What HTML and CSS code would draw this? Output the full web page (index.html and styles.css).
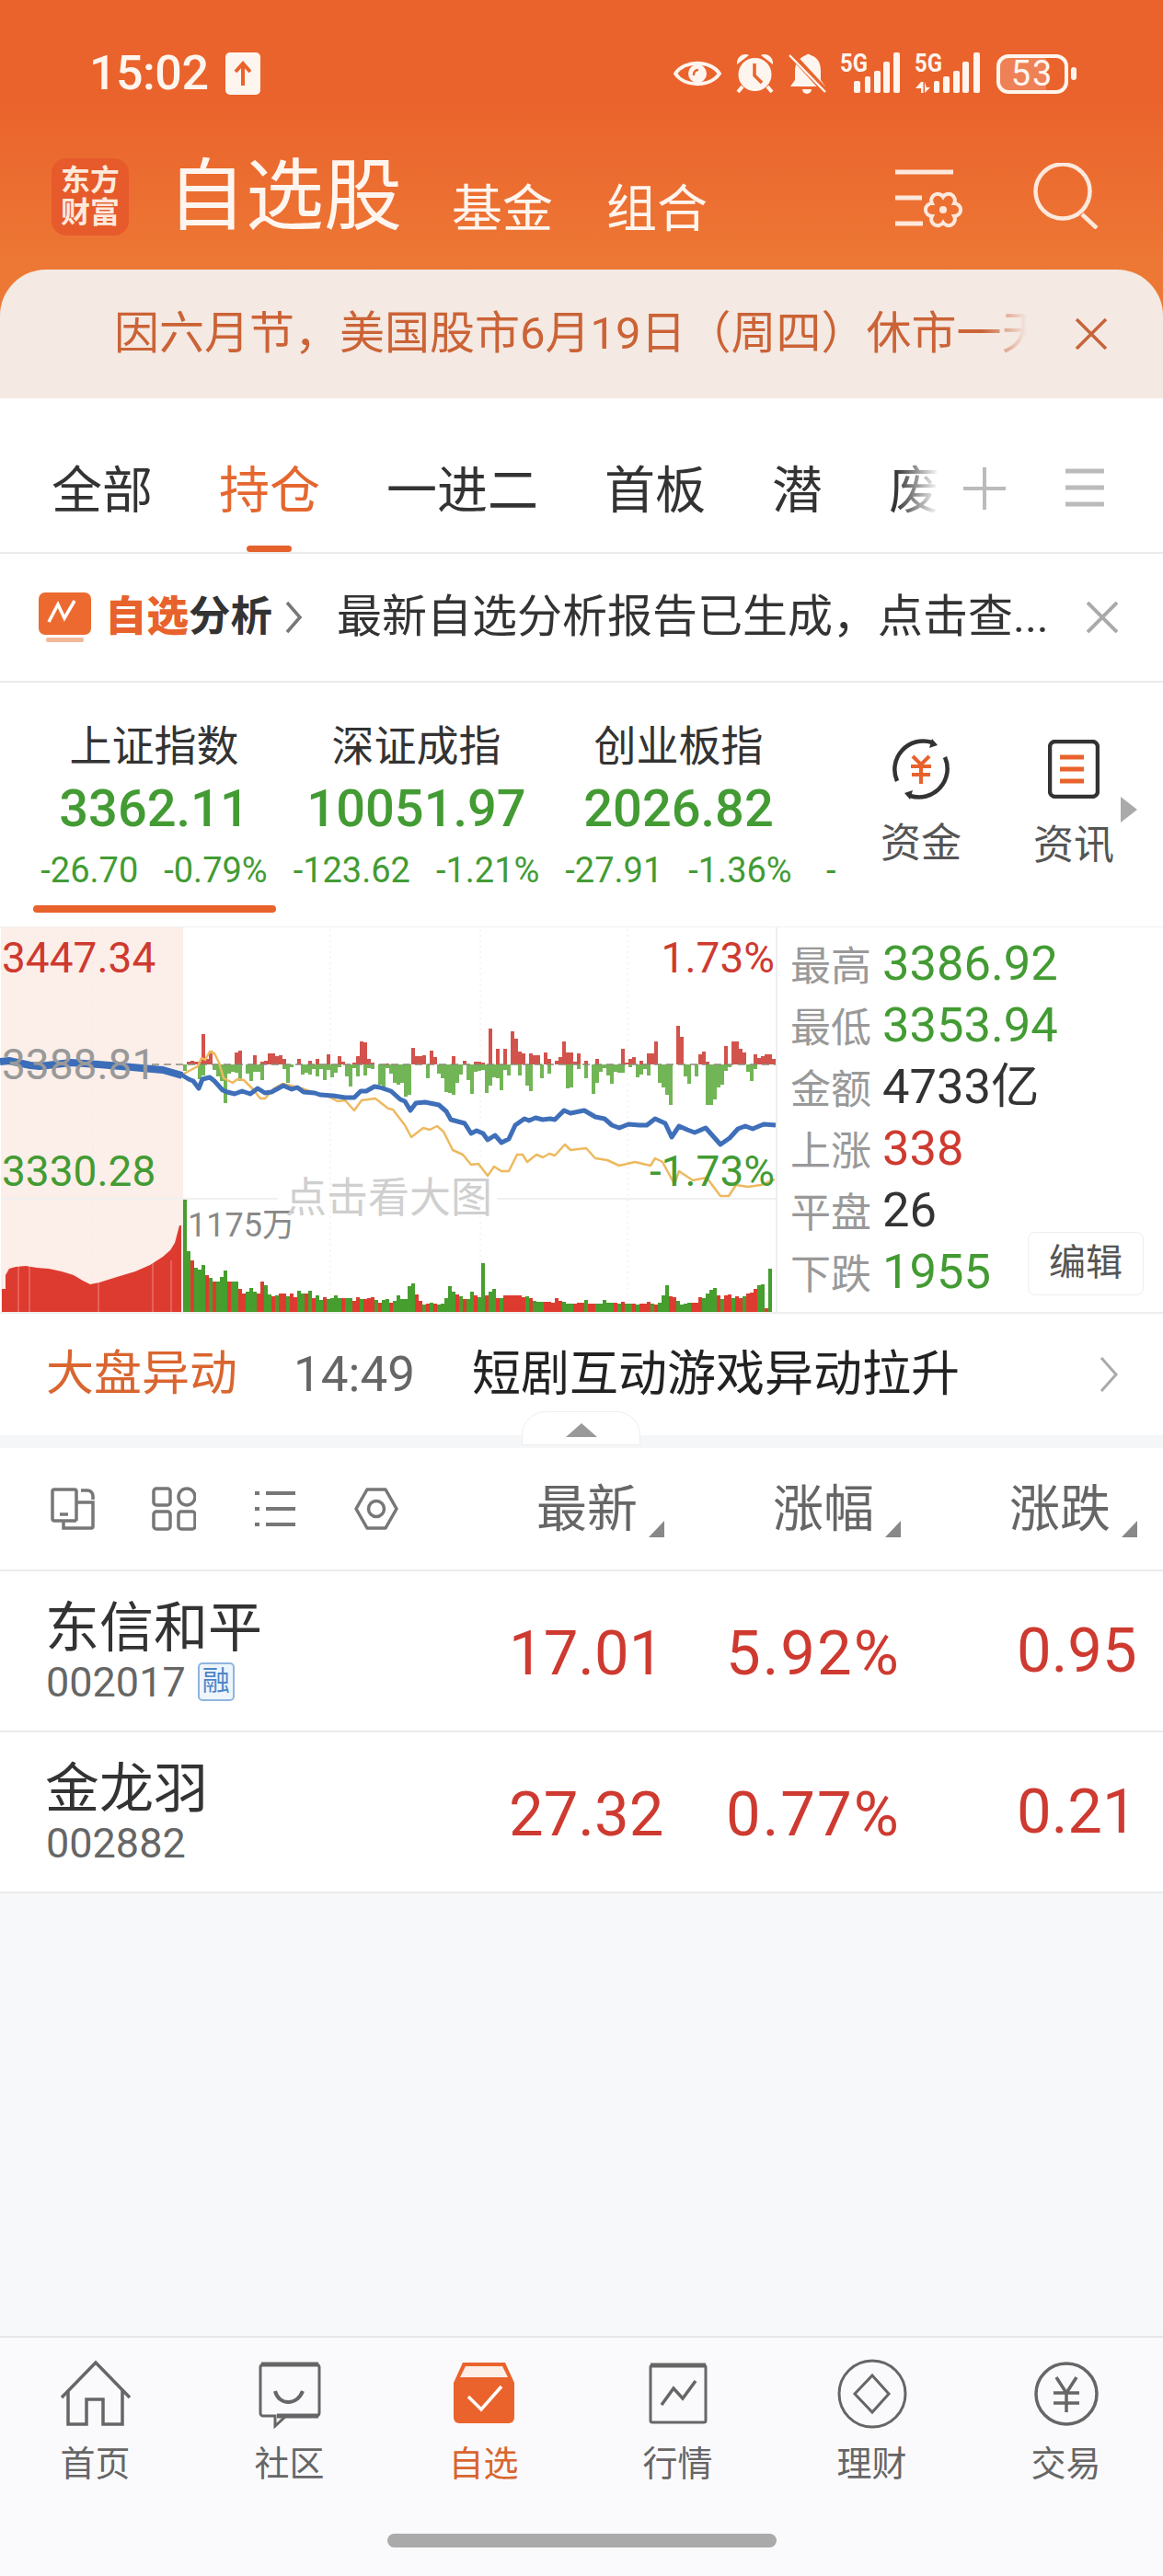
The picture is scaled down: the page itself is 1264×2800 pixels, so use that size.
FILE: index.html
```html
<!DOCTYPE html>
<html>
<head>
    <meta charset="utf-8">
    <title>自选股</title>
    <link rel="stylesheet" href="styles.css">
</head>
<body>
<div class="app">
    <div class="top">
        <div class="status">
            <span class="time">15:02</span>
            <svg class="up-box" width="38" height="46" viewBox="0 0 38 46"><rect width="38" height="46" rx="5" fill="#FFF5EF"/><path d="M19 36V12M11 21l8-9 8 9" fill="none" stroke="#EA632C" stroke-width="4"/></svg>
            <div class="status-icons">
                <svg width="52" height="36" viewBox="0 0 52 36"><path d="M2 18C12 3 40 3 50 18C40 33 12 33 2 18Z" fill="none" stroke="#FFF5EF" stroke-width="4"/><circle cx="26" cy="18" r="10" fill="#FFF5EF"/><path d="M22 20a5 5 0 0 1 5-6" fill="none" stroke="#EA632C" stroke-width="2.500"/></svg>
                <svg width="43" height="46" viewBox="0 0 43 46"><circle cx="21.500" cy="24" r="18" fill="#FFF5EF"/><path d="M2 13C1 5 9 0 15 3ZM41 13C42 5 34 0 28 3Z" fill="#FFF5EF"/><path d="M8 37l-5 6M35 37l5 6" stroke="#FFF5EF" stroke-width="4"/><path d="M21 12V25L29 33" fill="none" stroke="#EA632C" stroke-width="3.500"/></svg>
                <svg width="41" height="46" viewBox="0 0 41 46"><path d="M19 3a3 3 0 0 1 5 0C32 5 35 12 35 20V30L40 37H2L7 30V20C7 12 12 5 19 3Z" fill="#FFF5EF"/><path d="M15 40h10a5 5 0 0 1-10 0Z" fill="#FFF5EF"/><path d="M3 2L38 40" stroke="#EA632C" stroke-width="7"/><path d="M1 3L40 43" stroke="#FFF5EF" stroke-width="2.500"/></svg>
                <svg class="signal" width="66" height="46" viewBox="0 0 66 46" fill="#FFF5EF"><text class="five-g" x="0" y="21" textLength="30" lengthAdjust="spacingAndGlyphs">5G</text><rect x="15" y="31" width="7" height="13" rx="2"/><rect x="27" y="26" width="6" height="18" rx="2"/><rect x="37" y="20" width="7" height="24" rx="2"/><rect x="47" y="10" width="7" height="34" rx="2"/><rect x="58" y="0" width="7" height="44" rx="2"/></svg>
                <svg class="signal" width="72" height="46" viewBox="0 0 72 46" fill="#FFF5EF"><text class="five-g" x="0" y="21" textLength="30" lengthAdjust="spacingAndGlyphs">5G</text><path d="M7 32v12h2.500V32ZM1 39l6-7v7ZM11 32v12l6-6h-4Z"/><rect x="21" y="31" width="6" height="13" rx="2"/><rect x="31" y="26" width="7" height="18" rx="2"/><rect x="42" y="20" width="7" height="24" rx="2"/><rect x="52" y="10" width="7" height="34" rx="2"/><rect x="64" y="0" width="7" height="44" rx="2"/></svg>
                <div class="battery"><span class="battery-fill"></span><span class="battery-num">53</span></div>
                <span class="battery-nub"></span>
            </div>
        </div>
        <div class="nav">
            <div class="logo"><span>东方</span><span>财富</span></div>
            <span class="nav-title">自选股</span>
            <span class="nav-link nav-link-first">基金</span>
            <span class="nav-link">组合</span>
            <svg class="nav-set" width="73" height="64" viewBox="0 0 73 64" fill="none" stroke="#FDE8DC" stroke-width="5"><path d="M0 3H63M0 31H29M0 59H30"/><path transform="translate(32 24)" d="M20 6A7 7 0 0 1 32.100 13A7 7 0 0 1 32.100 27A7 7 0 0 1 20 34A7 7 0 0 1 7.900 27A7 7 0 0 1 7.900 13A7 7 0 0 1 20 6Z" stroke-width="4"/><circle cx="52" cy="44" r="4" fill="#FDE8DC" stroke="none"/></svg>
            <svg class="nav-search" width="72" height="72" viewBox="0 0 72 72" fill="none" stroke="#FDE8DC" stroke-width="4.500"><circle cx="32" cy="31" r="29.500"/><path d="M53 56L69 71"/></svg>
        </div>
        <div class="notice">
            <div class="notice-text">因六月节，美国股市6月19日（周四）休市一天</div>
            <svg class="notice-close" width="36" height="34" viewBox="0 0 36 34" fill="none" stroke="#C8643A" stroke-width="3.500"><path d="M2 1L34 33M34 1L2 33"/></svg>
        </div>
    </div>

    <div class="tabs">
        <div class="tabs-scroll">
            <span class="tab">全部</span>
            <span class="tab tab-on">持仓</span>
            <span class="tab">一进二</span>
            <span class="tab">首板</span>
            <span class="tab">潜</span>
            <span class="tab">废</span>
        </div>
        <svg class="tab-plus" width="46" height="46" viewBox="0 0 46 46" stroke="#BBBBBB" stroke-width="4"><path d="M0 23H46M23 0V46"/></svg>
        <svg class="tab-menu" width="42" height="42" viewBox="0 0 42 42" stroke="#BBBBBB" stroke-width="5"><path d="M0 3H42M0 21H42M0 39H42"/></svg>
    </div>

    <div class="analysis">
        <svg class="analysis-icon" width="57" height="54" viewBox="0 0 57 54"><rect width="57" height="46" rx="7" fill="#EC6A30"/><rect x="8" y="49" width="41" height="5" rx="2" fill="#F3B89A"/><path d="M11 32L21 13L28 28L39 9" fill="none" stroke="#fff" stroke-width="3.500"/></svg>
        <span class="analysis-name"><b>自选</b>分析</span>
        <svg class="analysis-arrow" width="20" height="36" viewBox="0 0 20 36" fill="none" stroke="#777" stroke-width="3.500"><path d="M3 2L17 18L3 34"/></svg>
        <span class="analysis-msg">最新自选分析报告已生成，点击查...</span>
        <svg class="analysis-close" width="34" height="34" viewBox="0 0 34 34" fill="none" stroke="#AAAAAA" stroke-width="4"><path d="M1 1L33 33M33 1L1 33"/></svg>
    </div>

    <div class="indexes">
        <div class="index-list">
            <div class="index index-on">
                <div class="index-name">上证指数</div>
                <div class="index-value">3362.11</div>
                <div class="index-sub"><span>-26.70</span><span>-0.79%</span></div>
                <div class="index-bar"></div>
            </div>
            <div class="index">
                <div class="index-name">深证成指</div>
                <div class="index-value">10051.97</div>
                <div class="index-sub"><span>-123.62</span><span>-1.21%</span></div>
            </div>
            <div class="index">
                <div class="index-name">创业板指</div>
                <div class="index-value">2026.82</div>
                <div class="index-sub"><span>-27.91</span><span>-1.36%</span></div>
            </div>
            <div class="index index-more">
                <div class="index-name">&nbsp;</div>
                <div class="index-value">&nbsp;</div>
                <div class="index-sub"><span>-</span></div>
            </div>
        </div>
        <div class="tool">
            <svg width="68" height="68" viewBox="0 0 68 68" fill="none"><path d="M8 47A31 31 0 0 1 46 5M60 21A31 31 0 0 1 22 63" stroke="#333" stroke-width="4.500"/><path d="M46 1l6 7-9 3ZM22 67l-6-7 9-3Z" fill="#333"/><path d="M25 20L34 29L43 20M23 31H45M24 40H44M34 29V50" stroke="#E8622C" stroke-width="4"/></svg>
            <span>资金</span>
        </div>
        <div class="tool">
            <svg width="56" height="64" viewBox="0 0 56 64" fill="none"><rect x="2" y="2" width="52" height="60" rx="6" stroke="#333" stroke-width="4.500"/><path d="M13 19H39M13 32H39M13 45H39" stroke="#E8622C" stroke-width="5"/></svg>
            <span>资讯</span>
        </div>
        <span class="tool-more"></span>
    </div>

    <div class="market">
        <div class="chart">
            <svg id="chart" width="845" height="418" viewBox="0 1008 845 418"></svg>
            <span class="chart-num red chart-top">3447.34</span>
            <span class="chart-num grey chart-mid">3388.81</span>
            <span class="chart-num green chart-low">3330.28</span>
            <span class="chart-num red chart-top chart-right">1.73%</span>
            <span class="chart-num green chart-low chart-right">-1.73%</span>
            <span class="chart-vol">1175万</span>
            <span class="chart-big">点击看大图</span>
        </div>
        <div class="stats">
            <div class="stat"><span>最高</span><b class="green">3386.92</b></div>
            <div class="stat"><span>最低</span><b class="green">3353.94</b></div>
            <div class="stat"><span>金额</span><b>4733亿</b></div>
            <div class="stat"><span>上涨</span><b class="red">338</b></div>
            <div class="stat"><span>平盘</span><b>26</b></div>
            <div class="stat"><span>下跌</span><b class="green">1955</b></div>
            <div class="stat-edit">编辑</div>
        </div>
    </div>

    <div class="move">
        <span class="move-tag">大盘异动</span>
        <span class="move-time">14:49</span>
        <span class="move-text">短剧互动游戏异动拉升</span>
        <svg class="move-arrow" width="20" height="38" viewBox="0 0 20 38" fill="none" stroke="#AAAAAA" stroke-width="3"><path d="M2 1L18 19L2 37"/></svg>
    </div>
    <div class="band"><div class="handle"><span></span></div></div>

    <div class="sort">
        <svg class="sort-icon" width="48" height="46" viewBox="0 0 48 46" fill="none" stroke="#777" stroke-width="3.500"><path d="M28 36H4a2 2 0 0 1-2-2V4a2 2 0 0 1 2-2H26a2 2 0 0 1 2 2V36"/><path d="M28 16H46V42a2 2 0 0 1-2 2H14V36"/><path d="M10 29H19M33 3h7a6 6 0 0 1 6 6V13"/></svg>
        <svg class="sort-icon" width="48" height="48" viewBox="0 0 48 48" fill="none" stroke="#777" stroke-width="3.500"><rect x="2" y="2" width="18" height="18" rx="3"/><rect x="29" y="2" width="18" height="18" rx="9"/><rect x="2" y="27" width="18" height="19" rx="3"/><rect x="29" y="27" width="18" height="19" rx="3"/></svg>
        <svg class="sort-icon" width="44" height="40" viewBox="0 0 44 40" fill="none" stroke="#777" stroke-width="4"><path d="M0 3H5M12 3H44M0 20H5M12 20H44M0 37H5M12 37H44"/></svg>
        <svg class="sort-icon" width="48" height="48" viewBox="0 0 48 48" fill="none" stroke="#777" stroke-width="3.500"><path d="M14 3H34L46 24L34 45H14L2 24Z" stroke-linejoin="round"/><circle cx="24" cy="24" r="8.500"/></svg>
        <div class="sort-col sort-new"><span>最新</span><i></i></div>
        <div class="sort-col sort-pct"><span>涨幅</span><i></i></div>
        <div class="sort-col sort-chg"><span>涨跌</span><i></i></div>
    </div>

    <div class="stock">
        <div class="stock-info">
            <div class="stock-name">东信和平</div>
            <div class="stock-code">002017<span class="badge">融</span></div>
        </div>
        <span class="stock-num stock-new">17.01</span>
        <span class="stock-num stock-pct">5.92%</span>
        <span class="stock-num stock-chg">0.95</span>
    </div>
    <div class="stock">
        <div class="stock-info">
            <div class="stock-name">金龙羽</div>
            <div class="stock-code">002882</div>
        </div>
        <span class="stock-num stock-new">27.32</span>
        <span class="stock-num stock-pct">0.77%</span>
        <span class="stock-num stock-chg">0.21</span>
    </div>
    <div class="blank"></div>

    <div class="bottom">
        <div class="bottom-items">
            <div class="item">
                <svg width="76" height="72" viewBox="0 0 76 72" fill="none" stroke="#666" stroke-width="3.500"><path d="M1 40L38 2L75 40"/><path d="M8 32V69H28V42H46V69H67V32"/></svg>
                <span>首页</span>
            </div>
            <div class="item">
                <svg width="68" height="72" viewBox="0 0 68 72" fill="none" stroke="#666" stroke-width="3"><path d="M18 60H5a3 3 0 0 1-3-3V7a3 3 0 0 1 3-3H63a3 3 0 0 1 3 3V57a3 3 0 0 1-3 3H30L18 71Z"/><path d="M3 4H65M20 60H65" stroke-width="5"/><path d="M18 33C22 49 42 49 48 33" stroke-width="4"/></svg>
                <span>社区</span>
            </div>
            <div class="item item-on">
                <svg width="68" height="72" viewBox="0 0 68 72"><path d="M11 2H57L67 24V62a6 6 0 0 1-6 6H7a6 6 0 0 1-6-6V24Z" fill="#EA632C"/><path d="M14 6H54L60 18H8Z" fill="#FDEFE6"/><path d="M17 39L31 53L53 28" fill="none" stroke="#fff" stroke-width="3.500"/></svg>
                <span>自选</span>
            </div>
            <div class="item">
                <svg width="64" height="72" viewBox="0 0 64 72" fill="none" stroke="#666" stroke-width="3"><rect x="2" y="5" width="60" height="62" rx="2"/><path d="M2 5H62" stroke-width="5"/><path d="M14 48L27 30L37 41L51 22" stroke-width="3.500"/></svg>
                <span>行情</span>
            </div>
            <div class="item">
                <svg width="76" height="76" viewBox="0 0 76 76" fill="none" stroke="#666" stroke-width="3"><circle cx="38" cy="38" r="36"/><path d="M38 18L56 38L38 58L19 38Z"/></svg>
                <span>理财</span>
            </div>
            <div class="item">
                <svg width="72" height="74" viewBox="0 0 72 74" fill="none" stroke="#666" stroke-width="3.500"><circle cx="36" cy="37" r="33"/><path d="M25 19L36 36L47 19M22 36H50M22 47H50M36 36V57"/></svg>
                <span>交易</span>
            </div>
        </div>
        <div class="home-bar"></div>
    </div>
</div>
<script src="chart.js"></script>
</body>
</html>
```

FILE: styles.css
```css
* {
    box-sizing: border-box;
}

body {
    margin: 0;
    background: #fff;
    font-family: Roboto, "Noto Sans CJK SC", sans-serif;
    color: #333;
}

svg {
    display: block;
    flex: none;
}

.red { color: #CE3A30; }
.green { color: #439B33; }
.grey { color: #999; }

.app {
    width: 1264px;
    height: 2800px;
    display: flex;
    flex-direction: column;
    overflow: hidden;
}

/* header */
.top {
    height: 433px;
    flex: none;
    background: linear-gradient(#EA632C, #EA632C 110px, #ED7835 293px);
    color: #FFF5EF;
}

.status {
    height: 46px;
    margin-top: 57px;
    display: flex;
    align-items: center;
    padding-left: 97px;
}

.time {
    font-size: 52px;
    font-weight: 500;
    line-height: 46px;
    letter-spacing: -0.5px;
}

.up-box {
    margin-left: 19px;
}

.status-icons {
    margin-left: auto;
    margin-right: 94px;
    display: flex;
    align-items: center;
}

.status-icons svg {
    margin-left: 15px;
}

.signal {
    overflow: visible;
}

.five-g {
    font-size: 27px;
    font-weight: 700;
}

.battery {
    position: relative;
    width: 78px;
    height: 43px;
    margin-left: 17px;
    border: 4px solid #FFF5EF;
    border-radius: 13px;
    overflow: hidden;
    text-align: center;
}

.battery-fill {
    position: absolute;
    left: 0;
    top: 0;
    bottom: 0;
    width: 50px;
    background: rgba(255, 255, 255, 0.2);
}

.battery-num {
    position: relative;
    font-size: 38px;
    line-height: 35px;
    letter-spacing: 2px;
}

.battery-nub {
    width: 6px;
    height: 14px;
    margin-left: 3px;
    background: #FFF5EF;
    border-radius: 3px;
}

.nav {
    height: 84px;
    margin-top: 69px;
    padding-left: 56px;
    display: flex;
    align-items: flex-end;
}

.logo {
    width: 84px;
    height: 84px;
    border-radius: 16px;
    background: #E65A2B;
    color: #FDE9DC;
    font-size: 32px;
    font-weight: 700;
    line-height: 35px;
    text-align: center;
    padding-top: 7px;
}

.logo span {
    display: block;
}

.nav-title {
    margin-left: 42px;
    font-size: 85px;
    line-height: 84px;
    height: 84px;
}

.nav-link {
    margin-left: 58px;
    font-size: 55px;
    line-height: 58px;
}

.nav-link-first {
    margin-left: 54px;
}

.nav-set {
    margin-left: 204px;
    margin-bottom: 8px;
}

.nav-search {
    margin-left: 77px;
    margin-bottom: 7px;
}

.notice {
    height: 140px;
    margin-top: 37px;
    background: #F4E9E3;
    border-radius: 50px 50px 0 0;
    display: flex;
    align-items: center;
    padding-left: 124px;
    color: #CB6336;
}

.notice-text {
    position: relative;
    width: 998px;
    font-size: 49px;
    line-height: 60px;
    white-space: nowrap;
    overflow: hidden;
}

.notice-text::after {
    content: "";
    position: absolute;
    right: 0;
    top: 0;
    bottom: 0;
    width: 55px;
    background: linear-gradient(to right, rgba(244, 233, 227, 0), #F4E9E3 90%);
}

.notice-close {
    margin-left: 46px;
}

/* tabs */
.tabs {
    height: 169px;
    flex: none;
    border-bottom: 2px solid #EBEBEB;
    display: flex;
    align-items: center;
    padding-left: 56px;
}

.tabs-scroll {
    position: relative;
    width: 970px;
    height: 167px;
    display: flex;
    gap: 72px;
    overflow: hidden;
    white-space: nowrap;
}

.tabs-scroll::after {
    content: "";
    position: absolute;
    left: 917px;
    top: 0;
    bottom: 0;
    width: 53px;
    background: linear-gradient(to right, rgba(255, 255, 255, 0), #fff 90%);
}

.tab {
    position: relative;
    flex: none;
    font-size: 55px;
    line-height: 58px;
    padding-top: 71px;
}

.tab-on {
    color: #E5672F;
}

.tab-on::after {
    content: "";
    position: absolute;
    left: 30px;
    bottom: 0;
    width: 49px;
    height: 7px;
    border-radius: 4px;
    background: #E5622C;
}

.tab-plus {
    margin-left: 21px;
    margin-top: 28px;
}

.tab-menu {
    margin-left: 65px;
    margin-top: 26px;
}

/* analysis */
.analysis {
    height: 140px;
    flex: none;
    border-bottom: 2px solid #EBEBEB;
    display: flex;
    align-items: center;
    padding-left: 42px;
}

.analysis-name {
    margin-left: 15px;
    font-size: 45.500px;
    font-weight: 700;
    line-height: 60px;
    color: #333;
}

.analysis-name b {
    color: #E8622C;
}

.analysis-arrow {
    margin-left: 13px;
}

.analysis-msg {
    margin-left: 37px;
    font-size: 49px;
    line-height: 60px;
    white-space: nowrap;
    width: 778px;
}

.analysis-close {
    margin-left: 37px;
}

/* indexes */
.indexes {
    height: 265px;
    flex: none;
    display: flex;
    align-items: flex-start;
}

.index-list {
    width: 910px;
    flex: none;
    padding-left: 25px;
    display: flex;
}

.index {
    width: 285px;
    flex: none;
    text-align: center;
    padding-top: 46px;
}

.index-name {
    font-size: 46px;
    line-height: 46px;
}

.index-value {
    margin-top: 17px;
    font-size: 56px;
    font-weight: 500;
    line-height: 56px;
    color: #439B33;
}

.index-sub {
    margin-top: 21px;
    font-size: 38px;
    line-height: 36px;
    color: #439B33;
    display: flex;
    justify-content: center;
    gap: 28px;
}

.index-bar {
    width: 264px;
    height: 8px;
    margin: 20px auto 0;
    border-radius: 4px;
    background: #E8622C;
}

.index-more {
    width: 30px;
}

.index-more .index-sub {
    justify-content: flex-start;
    padding-left: 18px;
}

.tool {
    width: 90px;
    margin-top: 60px;
    display: flex;
    flex-direction: column;
    align-items: center;
    font-size: 44px;
    line-height: 48px;
    color: #555;
}

.tool:nth-child(2) {
    margin-left: 46px;
}

.tool:nth-child(3) {
    margin-left: 76px;
    margin-top: 62px;
}

.tool span {
    margin-top: 23px;
}

.tool:nth-child(3) span {
    margin-top: 27px;
}

.tool-more {
    width: 0;
    height: 0;
    margin-top: 124px;
    margin-left: 6px;
    border-left: 18px solid #AAAAAA;
    border-top: 14px solid transparent;
    border-bottom: 14px solid transparent;
}

/* market chart */
.market {
    height: 421px;
    flex: none;
    border-top: 1px solid #F1F1F1;
    border-bottom: 2px solid #EEEEEE;
    display: flex;
}

.chart {
    position: relative;
    width: 845px;
    flex: none;
    border-right: 2px solid #EEEEEE;
}

.chart-num {
    position: absolute;
    left: 2px;
    font-size: 46px;
    line-height: 45px;
}

.chart-right {
    left: auto;
    right: 1px;
}

.chart-top {
    top: 11px;
}

.chart-mid {
    top: 127px;
}

.chart-low {
    top: 243px;
}

.chart-vol {
    position: absolute;
    left: 204px;
    top: 304px;
    font-size: 36px;
    line-height: 40px;
    color: #888;
}

.chart-big {
    position: absolute;
    left: 310px;
    top: 272px;
    font-size: 45px;
    line-height: 46px;
    color: #CFCFCF;
}

.stats {
    position: relative;
    flex: 1;
    padding: 5px 0 0 14px;
}

.stat {
    height: 67px;
    display: flex;
    align-items: center;
    font-size: 44px;
    color: #999;
}

.stat b {
    margin-left: 12px;
    font-size: 52.500px;
    font-weight: 400;
    line-height: 60px;
    color: #333;
}

.stat b.green { color: #439B33; }
.stat b.red { color: #CE3A30; }

.stat-edit {
    position: absolute;
    right: 21px;
    top: 331px;
    width: 126px;
    height: 69px;
    border: 1px solid #EEEEEE;
    border-radius: 8px;
    font-size: 40px;
    line-height: 65px;
    text-align: center;
    color: #555;
}

/* move row */
.move {
    height: 132px;
    flex: none;
    display: flex;
    align-items: center;
    padding-left: 50px;
}

.move-tag {
    width: 269px;
    font-size: 52px;
    line-height: 60px;
    color: #D9652F;
    white-space: nowrap;
}

.move-time {
    width: 194px;
    font-size: 53px;
    color: #666;
}

.move-text {
    width: 678px;
    font-size: 53px;
    line-height: 60px;
    color: #222;
}

.move-arrow {
    margin-left: 4px;
}

.band {
    position: relative;
    height: 14px;
    flex: none;
    background: #F5F6F8;
}

.handle {
    position: absolute;
    left: 567px;
    bottom: 3px;
    width: 129px;
    height: 37px;
    background: #fff;
    border: 1px solid #EEEEEE;
    border-radius: 26px 26px 0 0;
}

.handle span {
    display: block;
    width: 0;
    margin: 12px auto 0;
    border-left: 17px solid transparent;
    border-right: 17px solid transparent;
    border-bottom: 15px solid #999;
}

/* list head */
.sort {
    height: 134px;
    flex: none;
    border-bottom: 2px solid #EBEBEB;
    display: flex;
    align-items: center;
    padding-left: 55px;
}

.sort-icon:nth-child(2) {
    margin-left: 62px;
}

.sort-icon:nth-child(3) {
    margin-left: 64px;
}

.sort-icon:nth-child(4) {
    margin-left: 64px;
}

.sort-col {
    flex: none;
    display: flex;
    align-items: flex-end;
    font-size: 55px;
    line-height: 58px;
    color: #666;
    width: 257px;
}

.sort-col i {
    width: 0;
    height: 0;
    margin-left: 12px;
    margin-bottom: -2px;
    border-left: 17px solid transparent;
    border-bottom: 18px solid #888;
}

.sort-new {
    margin-left: 150px;
}

.stock {
    height: 175px;
    flex: none;
    border-bottom: 2px solid #EBEBEB;
    display: flex;
    align-items: center;
    padding-left: 49px;
}

.stock-info {
    width: 504px;
}

.stock-name {
    font-size: 59px;
    line-height: 62px;
    color: #333;
}

.stock-code {
    margin-top: 5px;
    padding-left: 1px;
    display: flex;
    align-items: center;
    font-size: 45px;
    line-height: 45px;
    color: #666;
}

.badge {
    width: 40px;
    height: 42px;
    margin-left: 13px;
    border: 2px solid #8FB5E0;
    border-radius: 5px;
    background: #EEF5FC;
    font-size: 30px;
    line-height: 36px;
    text-align: center;
    color: #4E86C8;
}

.stock-num {
    font-size: 67px;
    line-height: 74px;
    color: #CE3A30;
}

.stock-new {
    width: 236px;
    padding-top: 4px;
}

.stock-pct {
    width: 316px;
    padding-top: 4px;
    letter-spacing: 2px;
}

.stock-chg {
    padding-bottom: 2px;
}

.blank {
    flex: 1;
    background: #F7F8FA;
}

/* bottom */
.bottom {
    height: 261px;
    flex: none;
    background: #FAFAFC;
    border-top: 2px solid #E6E6E8;
}

.bottom-items {
    display: grid;
    grid-template-columns: repeat(6, 211px);
    height: 213px;
    margin-left: -2px;
}

.item {
    display: flex;
    flex-direction: column;
    align-items: center;
    font-size: 38px;
    color: #666;
}

.item svg {
    margin-top: 23px;
    height: 76px;
}

.item span {
    margin-top: 16px;
    line-height: 44px;
}

.item-on {
    color: #D9652F;
}

.home-bar {
    width: 423px;
    height: 15px;
    margin: 0 auto;
    border-radius: 8px;
    background: #AAAAAA;
}
```

FILE: chart.js
```javascript
// minute chart, drawn in screen coordinates (viewBox starts at y 1008)
const BAR_X = 199;
const BAR_STEP = 4;
const BASE_Y = 1157;
const VOL_Y = 1426;

const buyBars = {
    1: 3, 2: 4, 3: 3, 4: 3, 5: 33, 6: 6, 7: 15, 14: 13, 15: 15, 19: 10, 21: 3, 22: 4, 23: 12, 24: 12, 25: 9, 26: 10, 27: 6,
    31: 6, 34: 4, 36: 6, 39: 11, 42: 9, 43: 3, 46: 2, 47: 9, 48: 25, 49: 24, 50: 6, 51: 2, 55: 1, 62: 18, 63: 9, 64: 9, 65: 10,
    67: 15, 68: 8, 73: 9, 76: 4, 79: 3, 80: 3, 81: 2, 83: 39, 85: 17, 87: 17, 89: 36, 90: 28, 91: 14, 92: 12, 94: 12, 95: 10, 96: 10,
    98: 13, 99: 6, 101: 4, 102: 8, 103: 25, 104: 13, 105: 13, 106: 3, 107: 12, 109: 4, 112: 6, 119: 17, 120: 2, 121: 6, 122: 8,
    124: 4, 126: 12, 127: 12, 128: 25, 134: 42, 135: 30, 140: 11, 141: 14, 142: 3, 147: 20, 149: 25, 150: 25, 151: 17, 152: 13,
    155: 11, 156: 7, 157: 9, 158: 11, 159: 11, 160: 6
};

const sellBars = {
    0: 7, 4: 16, 5: 12, 8: 6, 9: 13, 10: 18, 11: 42, 12: 10, 13: 8, 14: 9, 15: 18, 17: 10, 18: 18, 19: 8, 20: 8, 21: 17, 27: 5, 28: 20, 29: 3,
    32: 11, 33: 9, 34: 11, 35: 5, 36: 13, 37: 5, 38: 17, 39: 6, 40: 14, 41: 9, 42: 3, 44: 13, 45: 24, 46: 4, 47: 13, 49: 12, 50: 4, 51: 5,
    53: 22, 54: 25, 55: 4, 56: 10, 57: 20, 58: 22, 59: 20, 60: 35, 61: 33, 66: 15, 69: 10, 70: 15, 71: 30, 72: 31, 73: 33, 74: 20, 75: 11,
    77: 17, 78: 32, 79: 8, 80: 7, 81: 6, 82: 31, 83: 23, 84: 14, 85: 15, 86: 28, 87: 6, 88: 12, 91: 12, 93: 23, 94: 29, 97: 15, 99: 10,
    104: 26, 105: 25, 107: 5, 109: 15, 111: 32, 112: 20, 113: 8, 114: 4, 115: 12, 116: 21, 117: 8, 118: 9, 119: 9, 121: 3, 123: 14, 124: 11,
    125: 5, 126: 12, 129: 20, 130: 25, 131: 33, 132: 44, 136: 13, 137: 21, 139: 13, 142: 44, 143: 44, 144: 38, 145: 25, 146: 22, 147: 7,
    148: 3, 153: 8, 154: 18, 155: 5
};

const volBars = ("122g 66g 56r 48g 46g 51g 40r 37g 33r 33g 38g 45g 33r 33g 33g 25r 20r 22g 26g 22g 20r 33r 29g 19g 17r 18g 20r 20r 17g 20r " +
    "16r 23g 20g 20r 23g 15r 18g 13g 16r 14g 15g 18g 15g 15r 15g 15g 12r 16r 14g 14r 15r 16r 13g 10r 13g 14g 10r 12g 18g 14g 14g 28g " +
    "31g 19r 12r 8g 9r 10g 9r 8g 9g 15g 28g 22g 19r 17g 14r 14g 22g 18r 16g 53g 18r 22g 25g 15r 15g 18r 18r 18r 18r 18r 16r 17g 15r 12g " +
    "11g 11g 11r 11r 10r 15r 12r 11g 9g 9g 9r 10r 10r 13g 9r 9r 9g 9g 13g 10g 10g 10r 9g 11r 9g 9g 9r 8g 9r 9r 11r 9g 8r 10g 18g 29g " +
    "17r 16r 12g 8g 9g 10g 10r 10r 16r 15g 20g 24g 26g 18r 14g 18r 19r 15g 17r 15r 17g 20r 21r 25r 29g 30g 4r 47g").split(" ");

const preVol = "2,1426 2,1401 6,1401 6,1386 10,1379 17,1377 28,1376 40,1378 53,1379 67,1382 80,1386 90,1392 98,1396 108,1394 127,1388 147,1382 163,1375 177,1366 185,1359 190,1351 195,1332 197,1332 197,1426";

const preLine = "0,1154 10,1153 33,1158 43,1159 77,1155 107,1157 143,1160 177,1163 198,1169";

const blueLine = "197,1168 205,1173 210,1175 216,1183 220,1173 228,1171 233,1175 242,1185 247,1187 255,1189 263,1186 272,1189 280,1183 288,1188 295,1187 308,1180 " +
    "317,1184 323,1182 330,1187 342,1188 348,1190 362,1191 375,1193 385,1193 392,1186 398,1186 407,1181 413,1182 425,1186 435,1195 440,1197 446,1207 452,1199 462,1198 " +
    "477,1201 485,1208 490,1217 505,1221 512,1232 518,1229 525,1232 530,1239 538,1234 545,1242 553,1238 560,1223 570,1216 575,1218 582,1215 590,1217 598,1216 603,1217 " +
    "613,1207 620,1210 635,1207 647,1214 657,1216 665,1223 673,1226 683,1222 695,1223 703,1223 712,1216 723,1221 730,1236 738,1224 747,1228 755,1231 767,1226 775,1235 " +
    "783,1244 793,1237 802,1227 810,1224 818,1227 830,1222 843,1223";

const yellowLine = "198,1168 215,1159 219,1150 223,1152 228,1143 233,1145 238,1155 243,1172 253,1177 258,1173 265,1174 275,1184 283,1194 288,1194 298,1183 307,1178 325,1182 " +
    "342,1188 355,1191 367,1197 375,1196 385,1207 393,1196 408,1194 422,1205 427,1206 440,1223 447,1236 460,1226 467,1228 475,1224 482,1230 492,1250 503,1255 512,1266 " +
    "520,1265 530,1278 537,1268 545,1273 553,1273 562,1255 568,1255 573,1263 583,1255 590,1258 597,1254 603,1256 614,1244 620,1250 637,1248 647,1259 660,1261 673,1267 " +
    "690,1263 707,1267 712,1259 720,1263 733,1287 738,1273 753,1283 768,1280 783,1300 792,1300 800,1288 813,1290 827,1288 842,1282";

function rect(x, y, w, h, fill) {
    return '<rect x="' + x + '" y="' + y + '" width="' + w + '" height="' + h + '" fill="' + fill + '"/>';
}

function line(d, color, width, extra) {
    return '<path d="' + d + '" fill="none" stroke="' + color + '" stroke-width="' + width + '" ' + (extra || "") + '/>';
}

function poly(points) {
    return "M" + points.replace(/ /g, "L");
}

let out = rect(1, 1008, 198, 418, "#FCEEE8");

[101, 359, 522, 682].forEach(function (x) {
    out += line("M" + x + " 1010V1426", "#F0EAE6", 1, 'stroke-dasharray="2 4"');
});
out += line("M1 1303H302M540 1303H845", "#F0F0F0", 2);

for (const i in buyBars) {
    out += rect(BAR_X + i * BAR_STEP, BASE_Y - buyBars[i], 4, buyBars[i], "#D2534C");
}
for (const i in sellBars) {
    out += rect(BAR_X + i * BAR_STEP, BASE_Y, 4, sellBars[i], "#72B556");
}
out += line("M165 1157H843", "#8A8A7A", 1.5, 'stroke-dasharray="8 5"');

out += line(poly(yellowLine), "#EDB95F", 2.5, 'stroke-linejoin="round"');
out += line(poly(preLine), "#3C6DB8", 8, 'stroke-linejoin="round"');
out += line(poly(blueLine), "#3F6FB9", 5, 'stroke-linejoin="round"');

out += '<polygon points="' + preVol + '" fill="#DE3B30"/>';
[20, 32, 107, 166, 186].forEach(function (x) {
    out += line("M" + x + " 1370V1426", "#fff", 1, 'opacity="0.4"');
});
volBars.forEach(function (bar, i) {
    const h = parseInt(bar);
    const color = bar.endsWith("g") ? "#459E2D" : "#DE3B30";
    out += rect(BAR_X + i * BAR_STEP, VOL_Y - h, 4, h, color);
});

document.getElementById("chart").innerHTML = out;
```
